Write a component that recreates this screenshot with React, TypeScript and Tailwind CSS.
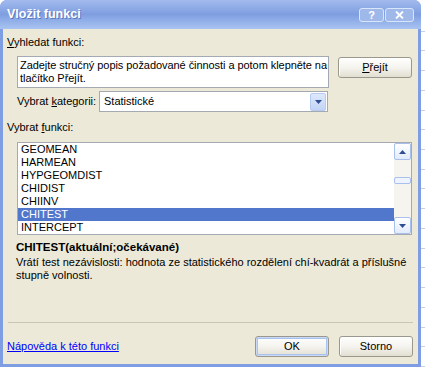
import { ReactNode } from "react";

const items = ["GEOMEAN", "HARMEAN", "HYPGEOMDIST", "CHIDIST", "CHIINV", "CHITEST", "INTERCEPT"];

function XpButton({ children, def }: { children: ReactNode; def?: boolean }) {
    return (
        <button
            className={
                "w-[74px] h-[21px] rounded-[3px] border border-[#9a988c] bg-gradient-to-b from-[#ffffff] via-[#f4f3ee] to-[#e2dfd1] text-[11px] text-black leading-none " +
                (def ? "shadow-[inset_0_0_0_1px_#c9d9f6,inset_0_0_0_2px_#a9c3f0]" : "shadow-[inset_1px_1px_0_#ffffff]")
            }
        >
            {children}
        </button>
    );
}

function ArrowBox({ up }: { up?: boolean }) {
    return (
        <div className="w-[17px] h-[17px] rounded-[2px] border border-[#a9c0ee] bg-gradient-to-b from-[#ffffff] to-[#e3ebfb] flex items-center justify-center">
            <svg width="7" height="4" viewBox="0 0 7 4">
                <path d={up ? "M0 4 L3.5 0 L7 4 Z" : "M0 0 L7 0 L3.5 4 Z"} fill="#2f4d94" />
            </svg>
        </div>
    );
}

export default function App() {
    return (
        <div className="w-[425px] h-[367px] flex bg-white font-['Liberation_Sans',Arial,sans-serif] text-[11px] text-black overflow-hidden">
            <div className="w-[421px] h-full flex flex-col rounded-t-[7px] bg-[#7f9de2]">
                {/* title bar */}
                <div className="h-[29px] flex items-center pl-[7px] pr-[7px] rounded-t-[7px] bg-gradient-to-b from-[#a3baee] via-[#7f9ee0] to-[#a9c4f2]">
                    <span className="text-white font-bold text-[12.5px] [text-shadow:1px_1px_0_#5a78c0]">Vložit funkci</span>
                    <div className="ml-auto flex gap-[1px] mt-[1px]">
                        <div className="w-[25px] h-[14px] rounded-[3px] border border-[#dbe5fa] bg-[#9fb8ea] flex items-center justify-center text-white font-bold text-[11px] leading-none">?</div>
                        <div className="w-[29px] h-[14px] rounded-[3px] border border-[#dbe5fa] bg-[#9fb8ea] flex items-center justify-center">
                            <svg width="9" height="8" viewBox="0 0 9 8">
                                <path d="M1 0.5 L8 7.5 M8 0.5 L1 7.5" stroke="#ffffff" strokeWidth="1.8" />
                            </svg>
                        </div>
                    </div>
                </div>

                {/* body */}
                <div className="flex-1 mx-[3px] mb-[3px] bg-[#ece9d8] flex flex-col pt-[7px] pb-[7px]">
                    <div className="h-[13px] leading-[13px] pl-[4px]">
                        <span className="underline">V</span>yhledat funkci:
                    </div>

                    <div className="mt-[7px] h-[32px] flex pl-[14px]">
                        <div className="w-[312px] h-[32px] border border-[#a5a9b2] bg-white pl-[2px] pt-[2px] leading-[13px] tracking-[-0.06px] whitespace-nowrap overflow-hidden">
                            Zadejte stručný popis požadované činnosti a potom klepněte na<br />tlačítko Přejít.
                        </div>
                        <div className="ml-[9px] mt-[1px]">
                            <XpButton>
                                <span className="underline">P</span>řejít
                            </XpButton>
                        </div>
                    </div>

                    <div className="mt-[3px] h-[21px] flex items-center pl-[14px]">
                        <span className="w-[82px]">
                            Vybrat <span className="underline">k</span>ategorii:
                        </span>
                        <div className="w-[229px] h-[21px] border border-[#a5a9b2] bg-white flex items-center pl-[4px] pr-[1px]">
                            <span>Statistické</span>
                            <div className="ml-auto w-[16px] h-[18px] rounded-[2px] border border-[#b7cbf2] bg-gradient-to-b from-[#dfe8fb] to-[#c2d4f6] flex items-center justify-center">
                                <svg width="7" height="4" viewBox="0 0 7 4">
                                    <path d="M0 0 L7 0 L3.5 4 Z" fill="#2f4d94" />
                                </svg>
                            </div>
                        </div>
                    </div>

                    <div className="mt-[9px] h-[13px] leading-[13px] pl-[4px]">
                        Vybrat <span className="underline">f</span>unkci:
                    </div>

                    <div className="mt-[8px] ml-[14px] w-[395px] h-[93px] border border-[#a5a9b2] bg-white flex">
                        <div className="flex-1 flex flex-col">
                            {items.map((it) => (
                                <div
                                    key={it}
                                    className={
                                        "h-[13px] leading-[13px] pl-[3px] " +
                                        (it === "CHITEST" ? "bg-[#5177cc] text-white" : "")
                                    }
                                >
                                    {it}
                                </div>
                            ))}
                        </div>
                        <div className="w-[17px] bg-[#f5f4ee] flex flex-col">
                            <ArrowBox up />
                            <div className="flex-1 relative">
                                <div className="absolute left-0 top-[17px] w-[17px] h-[7px] rounded-[2px] border border-[#a9c0ee] bg-[#eef3fd]" />
                            </div>
                            <ArrowBox />
                        </div>
                    </div>

                    <div className="mt-[6px] h-[13px] leading-[13px] pl-[13px] font-bold text-[11.5px]">
                        CHITEST(aktuální;očekávané)
                    </div>
                    <div className="mt-[2px] leading-[13px] pl-[13px]">
                        Vrátí test nezávislosti: hodnota ze statistického rozdělení chí-kvadrát a příslušné<br />stupně volnosti.
                    </div>

                    <div className="mt-auto mx-[5px] h-[1px] bg-[#cac6b6]" />

                    <div className="mt-[13px] h-[21px] flex items-center pl-[4px] pr-[5px]">
                        <span className="text-[#0000ff] underline">Nápověda k této funkci</span>
                        <div className="ml-auto flex gap-[10px]">
                            <XpButton def>OK</XpButton>
                            <XpButton>Storno</XpButton>
                        </div>
                    </div>
                </div>
            </div>

            {/* spreadsheet behind the dialog */}
            <div className="flex-1 flex flex-col pt-[12px]">
                {Array.from({ length: 18 }).map((_, i) => (
                    <div key={i} className="h-[20px] border-b border-[#c7d0e4]" />
                ))}
            </div>
        </div>
    );
}
